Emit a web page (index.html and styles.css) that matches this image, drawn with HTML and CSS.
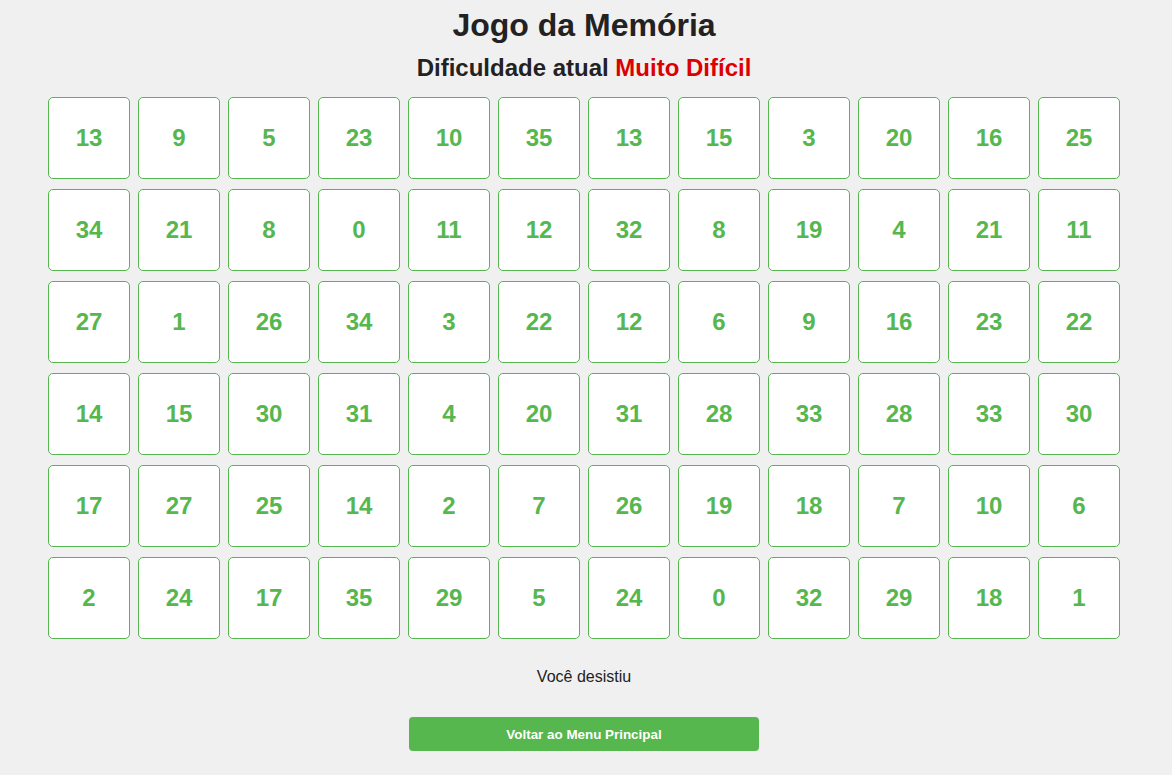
FILE: index.html
```html
<!DOCTYPE html>
<html lang="pt">
<head>
<meta charset="utf-8">
<title>Jogo da Memória</title>
<link rel="stylesheet" href="styles.css">
</head>
<body>
<div class="page">
  <h1 class="title">Jogo da Memória</h1>
  <h2 class="subtitle">Dificuldade atual <span class="level">Muito Difícil</span></h2>
  <div class="board">
    <div class="card">13</div><div class="card">9</div><div class="card">5</div><div class="card">23</div><div class="card">10</div><div class="card">35</div><div class="card">13</div><div class="card">15</div><div class="card">3</div><div class="card">20</div><div class="card">16</div><div class="card">25</div>
    <div class="card">34</div><div class="card">21</div><div class="card">8</div><div class="card">0</div><div class="card">11</div><div class="card">12</div><div class="card">32</div><div class="card">8</div><div class="card">19</div><div class="card">4</div><div class="card">21</div><div class="card">11</div>
    <div class="card">27</div><div class="card">1</div><div class="card">26</div><div class="card">34</div><div class="card">3</div><div class="card">22</div><div class="card">12</div><div class="card">6</div><div class="card">9</div><div class="card">16</div><div class="card">23</div><div class="card">22</div>
    <div class="card">14</div><div class="card">15</div><div class="card">30</div><div class="card">31</div><div class="card">4</div><div class="card">20</div><div class="card">31</div><div class="card">28</div><div class="card">33</div><div class="card">28</div><div class="card">33</div><div class="card">30</div>
    <div class="card">17</div><div class="card">27</div><div class="card">25</div><div class="card">14</div><div class="card">2</div><div class="card">7</div><div class="card">26</div><div class="card">19</div><div class="card">18</div><div class="card">7</div><div class="card">10</div><div class="card">6</div>
    <div class="card">2</div><div class="card">24</div><div class="card">17</div><div class="card">35</div><div class="card">29</div><div class="card">5</div><div class="card">24</div><div class="card">0</div><div class="card">32</div><div class="card">29</div><div class="card">18</div><div class="card">1</div>
  </div>
  <p class="status">Você desistiu</p>
  <button class="back-btn">Voltar ao Menu Principal</button>
</div>
</body>
</html>
```

FILE: styles.css
```css
html, body {
  margin: 0;
  padding: 0;
  background: #f0f0f0;
}
body {
  font-family: "Liberation Sans", Arial, sans-serif;
  color: #222;
}
.page {
  display: flex;
  flex-direction: column;
  align-items: center;
  padding: 7px 4px 0 0;
}
.title {
  margin: 0;
  font-size: 32px;
  font-weight: bold;
  line-height: 37px;
}
.subtitle {
  margin: 10px 0 0;
  font-size: 24px;
  font-weight: bold;
  line-height: 28px;
}
.level {
  color: #dd0000;
}
.board {
  margin-top: 15px;
  display: grid;
  grid-template-columns: repeat(12, 82px);
  grid-auto-rows: 82px;
  column-gap: 8px;
  row-gap: 10px;
}
.card {
  box-sizing: border-box;
  background: #fff;
  border: 1px solid #55b74e;
  border-radius: 5px;
  display: flex;
  align-items: center;
  justify-content: center;
  font-size: 24px;
  font-weight: bold;
  color: #55b74e;
}
.status {
  margin: 29px 0 0;
  font-size: 16px;
  line-height: 18px;
}
.back-btn {
  margin-top: 31px;
  width: 350px;
  height: 34px;
  border: none;
  border-radius: 4px;
  background: #55b74e;
  color: #fff;
  font-family: "Liberation Sans", Arial, sans-serif;
  font-size: 13.4px;
  font-weight: bold;
  cursor: pointer;
}
```
